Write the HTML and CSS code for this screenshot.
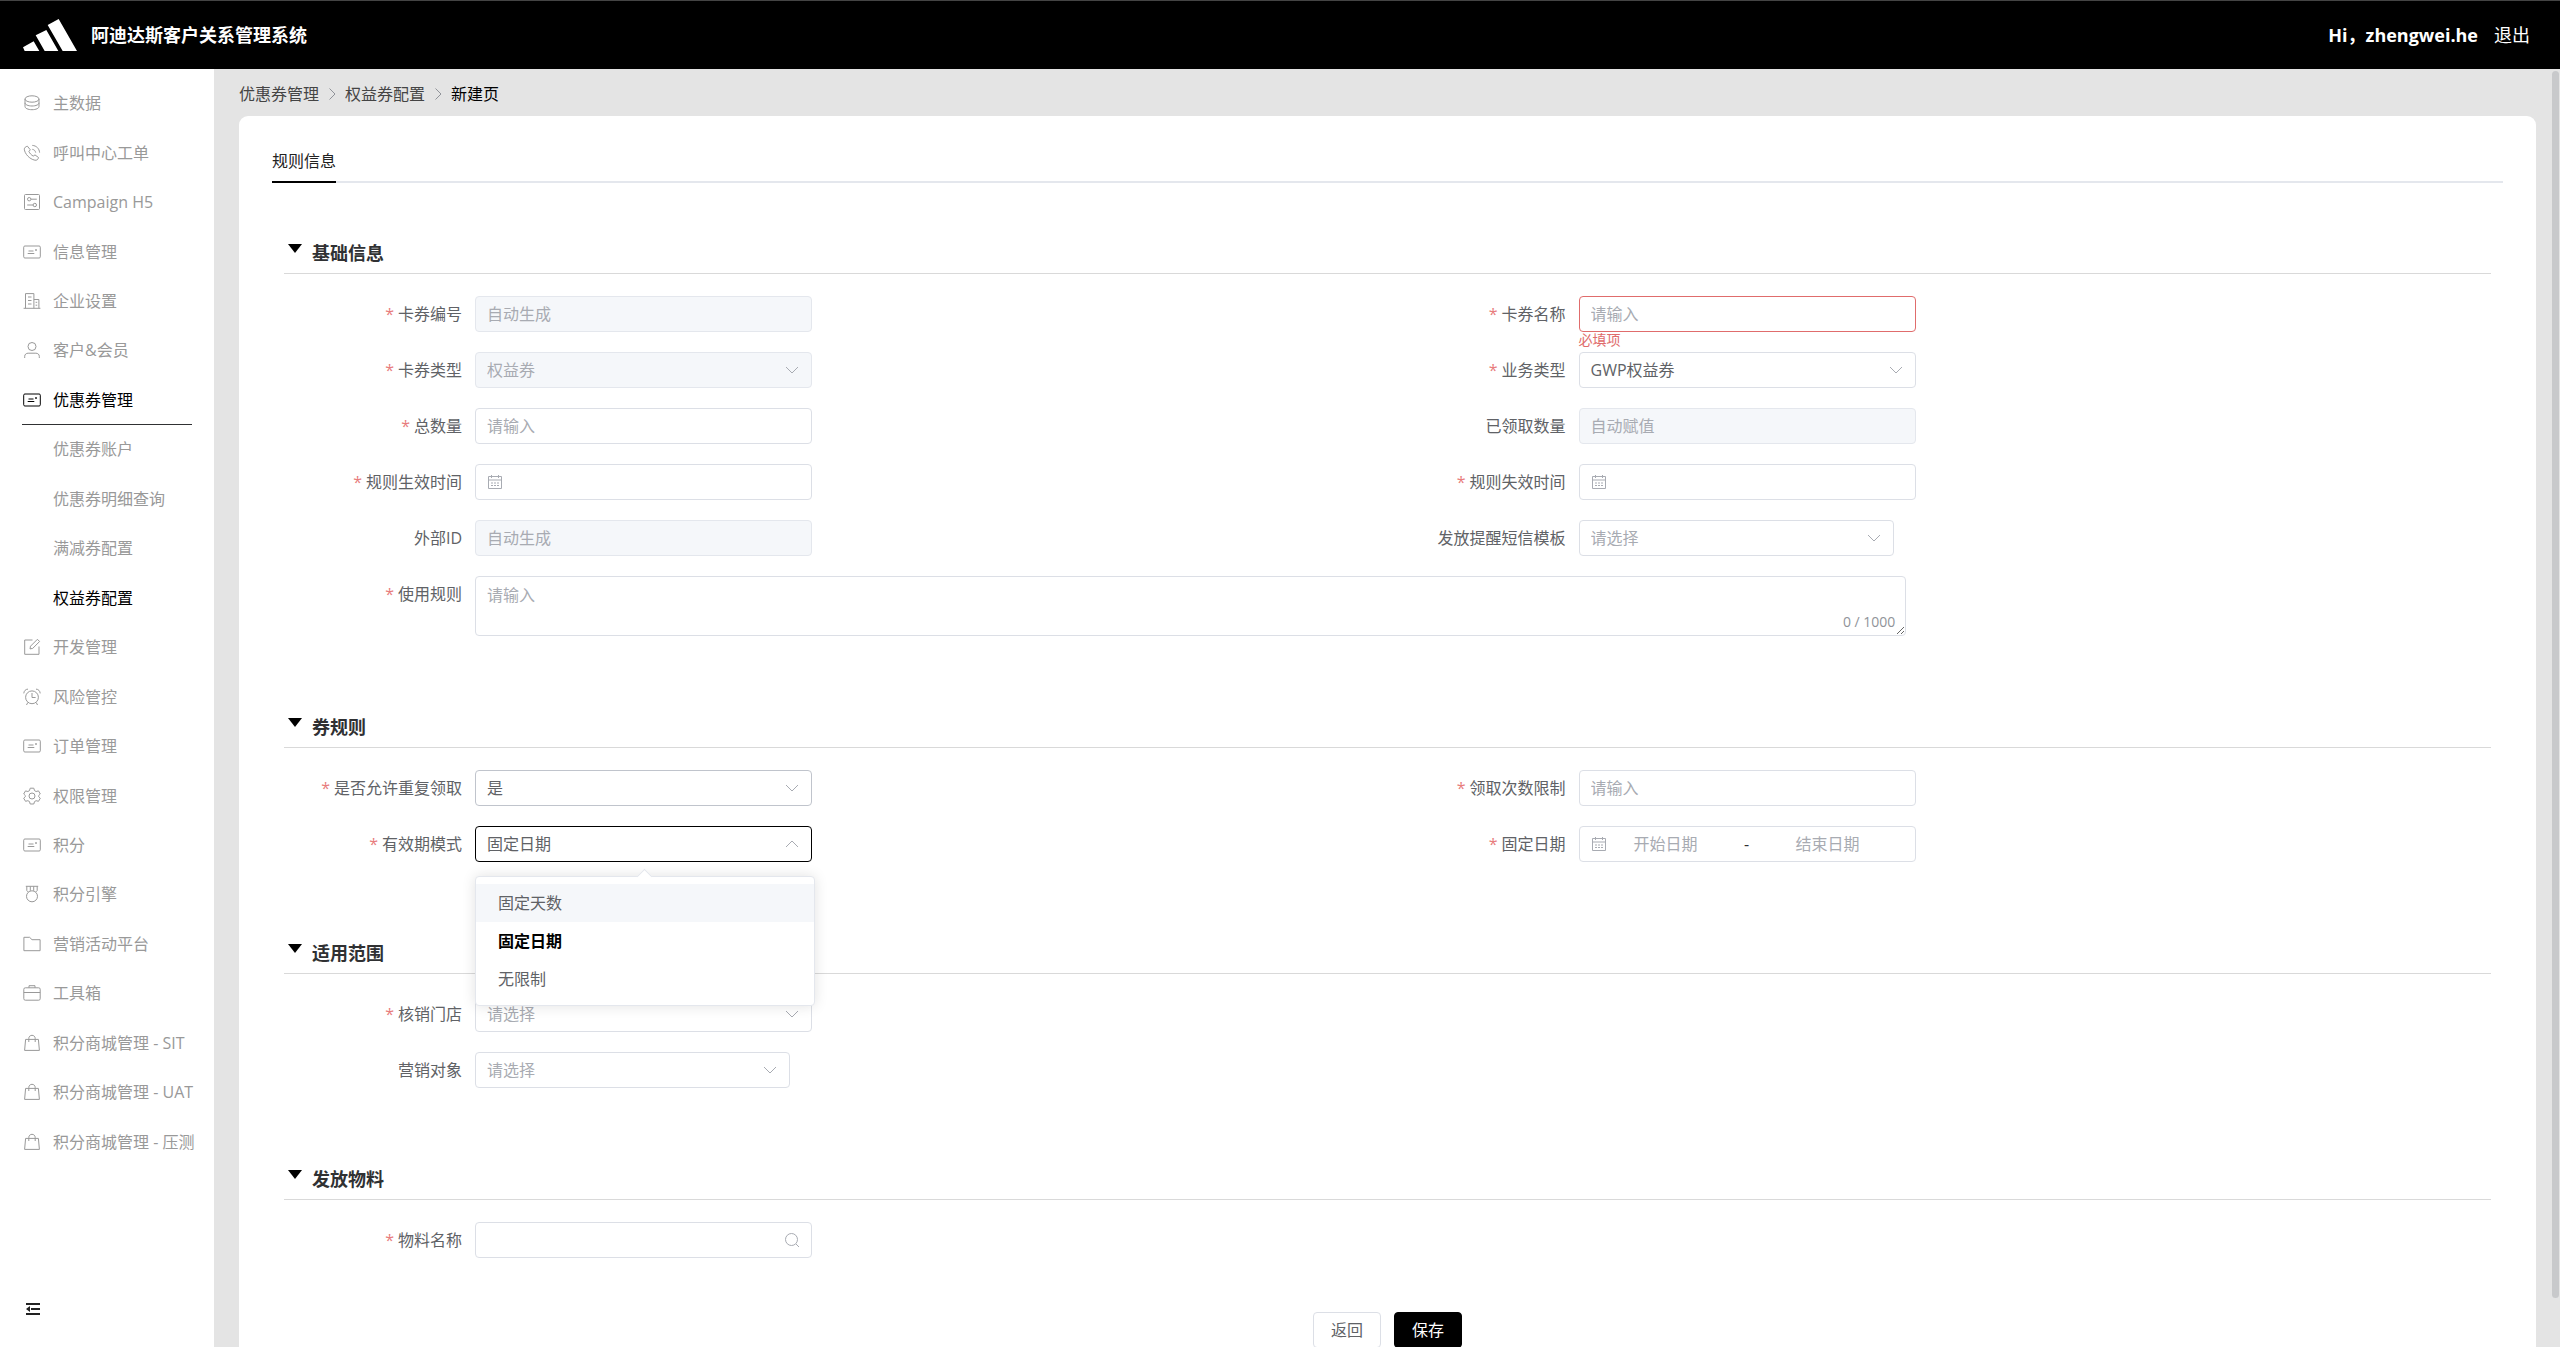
FILE: index.html
```html
<!DOCTYPE html>
<html lang="zh-CN">
<head>
<meta charset="utf-8">
<title>阿迪达斯客户关系管理系统</title>
<link rel="stylesheet" href="styles.css">
</head>
<body>
<svg class="sprite" aria-hidden="true">
  <symbol id="i-coin" viewBox="0 0 18 18"><ellipse cx="9" cy="5" rx="7" ry="3.2"/><path d="M2 5v7.5c0 1.8 3 3.2 7 3.2s7-1.400 7-3.200V5M2 8.800c0 1.800 3 3.200 7 3.200s7-1.400 7-3.200"/></symbol>
  <symbol id="i-phone" viewBox="0 0 18 18"><path d="M4.400 2.200 7.300 5.800 5.900 7.500c.9 1.900 2.400 3.500 4.300 4.600l1.800-1.200 3.500 2.600c-.3 2-1.800 3.100-3.600 2.700C6.300 15 1.800 9.800 1.300 5.200c0-1.400 1.400-2.700 3.100-3zM9.300 5.300c1.900.3 3 1.500 3.400 3.300M9.300 1.400c4.200.3 6.900 3.100 7.300 7.200"/></symbol>
  <symbol id="i-panel" viewBox="0 0 18 18"><rect x="1.500" y="1.500" width="15" height="15" rx="1"/><circle cx="6.200" cy="6.200" r="1.700"/><circle cx="11.800" cy="12" r="1.700"/><path d="M8 6.200h5.800M4.200 12h5.800"/></symbol>
  <symbol id="i-card" viewBox="0 0 18 18"><rect x=".700" y="3" width="16.600" height="12" rx="1.200"/><path d="M5.500 8h5M4.700 10.500h6.600"/><circle cx="13" cy="7" r=".5" fill="currentColor"/></symbol>
  <symbol id="i-office" viewBox="0 0 18 18"><path d="M2.500 16.300V1.600h8.400v14.700M10.900 7.500h5v8.800M.6 16.300h16.800M5 5h3.500M5 8.500h3.500M5 12h3.500M12.600 10.300h1.600M12.600 13.200h1.600"/></symbol>
  <symbol id="i-user" viewBox="0 0 18 18"><circle cx="9" cy="5.500" r="4"/><path d="M1.700 17v-1.600c0-1.900 1.400-3.200 3.400-3.200h7.800c2 0 3.400 1.300 3.400 3.200V17"/></symbol>
  <symbol id="i-edit" viewBox="0 0 18 18"><path d="M9.500 2H1.700v14.300H16V8.500M7 10.900l.5-2.700 6.900-6.900 2.200 2.200-6.900 6.900z"/></symbol>
  <symbol id="i-alarm" viewBox="0 0 18 18"><circle cx="9" cy="9.300" r="6.400"/><path d="M9 5v4.500h3.600M4.800 14.500l-1.300 2.500M13.200 14.500l1.300 2.500M.8 5.400C.9 3 2.600 1.200 5 1.100M17.200 5.400C17.100 3 15.400 1.200 13 1.100"/></symbol>
  <symbol id="i-gear" viewBox="0 0 18 18"><circle cx="9" cy="9" r="3"/><path d="M7.200 1.200h3.600l.7 2.400 1.600.9 2.400-.6 1.800 3.100L15.600 8.700v.8l1.700 1.700-1.800 3.100-2.400-.6-1.600.9-.7 2.400H7.200l-.7-2.400-1.600-.9-2.400.6-1.800-3.100 1.700-1.700v-.8L.7 7l1.800-3.100 2.400.6 1.600-.9z"/></symbol>
  <symbol id="i-medal" viewBox="0 0 18 18"><circle cx="9" cy="11.300" r="5.500"/><path d="M2.800 1.300h12.400M3.800 1.300v4.200l1.600 1.600M14.200 1.300v4.200l-1.600 1.600M7.300 1.300v4.500M10.700 1.300v4.500"/></symbol>
  <symbol id="i-folder" viewBox="0 0 18 18"><path d="M.9 15.700V2.300h5.700l2.400 2.400h8.100v11z"/></symbol>
  <symbol id="i-case" viewBox="0 0 18 18"><rect x=".8" y="3.800" width="16.400" height="12.400" rx="1.500"/><path d="M.8 8.500h16.400M6 3.800V1.700h6v2.100"/></symbol>
  <symbol id="i-bag" viewBox="0 0 18 18"><path d="M2.600 5.400h12.800l1 11H1.600zM5.800 8V4.500C5.800 2.600 7.200 1.300 9 1.300s3.200 1.300 3.200 3.200V8"/></symbol>
  <symbol id="i-fold" viewBox="0 0 14 12"><path fill="currentColor" stroke="none" d="M0 0h14v2H0zM5 5h9v2H5zM0 10h14v2H0zM4 3v6L0 6z"/></symbol>
  <symbol id="i-right" viewBox="0 0 16 16"><path d="m5.500 2.500 5.500 5.500-5.500 5.500"/></symbol>
  <symbol id="i-down" viewBox="0 0 16 16"><path d="m2 5 6 6 6-6"/></symbol>
  <symbol id="i-up" viewBox="0 0 16 16"><path d="m2 11 6-6 6 6"/></symbol>
  <symbol id="i-date" viewBox="0 0 16 16"><path d="M1.500 2.500h13v12h-13zM1.500 6h13M4.500 1v3M11.500 1v3M4 9h2M7 9h2M10 9h2M4 11.500h2M7 11.500h2M10 11.500h2"/></symbol>
  <symbol id="i-search" viewBox="0 0 16 16"><circle cx="7.500" cy="7.500" r="6"/><path d="m12 12 3 3"/></symbol>
</svg>

<header class="topbar">
  <svg class="logo" viewBox="0 0 162 96" role="img" aria-label="adidas"><path d="M74 18 107 0l55 96h-43zM38 49l32-16 36 63H65zM0 85l32-18 17 29H5z"/></svg>
  <h1 class="app-name">阿迪达斯客户关系管理系统</h1>
  <span class="hello">Hi，zhengwei.he</span>
  <a class="logout" href="#">退出</a>
</header>

<div class="shell">
  <nav class="sidebar">
    <ul class="menu">
      <li><a href="#"><svg class="icon"><use href="#i-coin"/></svg>主数据</a></li>
      <li><a href="#"><svg class="icon"><use href="#i-phone"/></svg>呼叫中心工单</a></li>
      <li><a href="#"><svg class="icon"><use href="#i-panel"/></svg>Campaign H5</a></li>
      <li><a href="#"><svg class="icon"><use href="#i-card"/></svg>信息管理</a></li>
      <li><a href="#"><svg class="icon"><use href="#i-office"/></svg>企业设置</a></li>
      <li><a href="#"><svg class="icon"><use href="#i-user"/></svg>客户&amp;会员</a></li>
      <li><a class="open" href="#"><svg class="icon"><use href="#i-card"/></svg>优惠券管理</a></li>
      <li><a class="sub" href="#">优惠券账户</a></li>
      <li><a class="sub" href="#">优惠券明细查询</a></li>
      <li><a class="sub" href="#">满减券配置</a></li>
      <li><a class="sub current" href="#">权益券配置</a></li>
      <li><a href="#"><svg class="icon"><use href="#i-edit"/></svg>开发管理</a></li>
      <li><a href="#"><svg class="icon"><use href="#i-alarm"/></svg>风险管控</a></li>
      <li><a href="#"><svg class="icon"><use href="#i-card"/></svg>订单管理</a></li>
      <li><a href="#"><svg class="icon"><use href="#i-gear"/></svg>权限管理</a></li>
      <li><a href="#"><svg class="icon"><use href="#i-card"/></svg>积分</a></li>
      <li><a href="#"><svg class="icon"><use href="#i-medal"/></svg>积分引擎</a></li>
      <li><a href="#"><svg class="icon"><use href="#i-folder"/></svg>营销活动平台</a></li>
      <li><a href="#"><svg class="icon"><use href="#i-case"/></svg>工具箱</a></li>
      <li><a href="#"><svg class="icon"><use href="#i-bag"/></svg>积分商城管理 - SIT</a></li>
      <li><a href="#"><svg class="icon"><use href="#i-bag"/></svg>积分商城管理 - UAT</a></li>
      <li><a href="#"><svg class="icon"><use href="#i-bag"/></svg>积分商城管理 - 压测</a></li>
    </ul>
    <div class="sidebar-foot">
      <button class="fold" type="button" aria-label="收起菜单"><svg><use href="#i-fold"/></svg></button>
    </div>
  </nav>

  <main class="main">
    <nav class="crumbs">
      <a href="#">优惠券管理</a>
      <svg class="icon"><use href="#i-right"/></svg>
      <a href="#">权益券配置</a>
      <svg class="icon"><use href="#i-right"/></svg>
      <span>新建页</span>
    </nav>

    <form class="card">
      <div class="tabs"><button class="tab" type="button">规则信息</button></div>

      <div class="sections">
        <section class="section">
          <h2 class="section-head"><span class="caret"></span>基础信息</h2>
          <div class="fields">
            <div class="field">
              <label class="required" for="code">卡券编号</label>
              <div class="control"><input id="code" type="text" placeholder="自动生成" disabled></div>
            </div>
            <div class="field">
              <label class="required" for="name">卡券名称</label>
              <div class="control invalid"><input id="name" type="text" placeholder="请输入"><p class="error">必填项</p></div>
            </div>
            <div class="field">
              <label class="required" for="kind">卡券类型</label>
              <div class="control"><select id="kind" disabled><option>权益券</option></select><svg class="icon suffix"><use href="#i-down"/></svg></div>
            </div>
            <div class="field">
              <label class="required" for="biz">业务类型</label>
              <div class="control"><select id="biz"><option>GWP权益券</option></select><svg class="icon suffix"><use href="#i-down"/></svg></div>
            </div>
            <div class="field">
              <label class="required" for="total">总数量</label>
              <div class="control"><input id="total" type="text" placeholder="请输入"></div>
            </div>
            <div class="field">
              <label for="taken">已领取数量</label>
              <div class="control"><input id="taken" type="text" placeholder="自动赋值" disabled></div>
            </div>
            <div class="field">
              <label class="required" for="from">规则生效时间</label>
              <div class="control dated"><input id="from" type="text"><svg class="icon prefix"><use href="#i-date"/></svg></div>
            </div>
            <div class="field">
              <label class="required" for="to">规则失效时间</label>
              <div class="control dated"><input id="to" type="text"><svg class="icon prefix"><use href="#i-date"/></svg></div>
            </div>
            <div class="field">
              <label for="ext">外部ID</label>
              <div class="control"><input id="ext" type="text" placeholder="自动生成" disabled></div>
            </div>
            <div class="field">
              <label for="sms">发放提醒短信模板</label>
              <div class="control narrow"><select id="sms" class="empty"><option>请选择</option></select><svg class="icon suffix"><use href="#i-down"/></svg></div>
            </div>
            <div class="field wide">
              <label class="required" for="usage">使用规则</label>
              <div class="control"><textarea id="usage" placeholder="请输入"></textarea><span class="count">0 / 1000</span></div>
            </div>
          </div>
        </section>

        <section class="section">
          <h2 class="section-head"><span class="caret"></span>券规则</h2>
          <div class="fields">
            <div class="field">
              <label class="required" for="repeat">是否允许重复领取</label>
              <div class="control hovered"><select id="repeat"><option>是</option></select><svg class="icon suffix"><use href="#i-down"/></svg></div>
            </div>
            <div class="field">
              <label class="required" for="limit">领取次数限制</label>
              <div class="control"><input id="limit" type="text" placeholder="请输入"></div>
            </div>
            <div class="field">
              <label class="required" for="mode">有效期模式</label>
              <div class="control active">
                <select id="mode"><option>固定日期</option></select><svg class="icon suffix"><use href="#i-up"/></svg>
                <ul class="options" role="listbox">
                  <li class="hover" role="option">固定天数</li>
                  <li class="selected" role="option" aria-selected="true">固定日期</li>
                  <li role="option">无限制</li>
                </ul>
              </div>
            </div>
            <div class="field">
              <label class="required" for="start">固定日期</label>
              <div class="control range">
                <svg class="icon"><use href="#i-date"/></svg>
                <input id="start" type="text" placeholder="开始日期">
                <span class="dash">-</span>
                <input type="text" placeholder="结束日期" aria-label="结束日期">
              </div>
            </div>
          </div>
        </section>

        <section class="section">
          <h2 class="section-head"><span class="caret"></span>适用范围</h2>
          <div class="fields">
            <div class="field wide">
              <label class="required" for="store">核销门店</label>
              <div class="control"><select id="store" class="empty"><option>请选择</option></select><svg class="icon suffix"><use href="#i-down"/></svg></div>
            </div>
            <div class="field">
              <label for="target">营销对象</label>
              <div class="control narrow"><select id="target" class="empty"><option>请选择</option></select><svg class="icon suffix"><use href="#i-down"/></svg></div>
            </div>
          </div>
        </section>

        <section class="section">
          <h2 class="section-head"><span class="caret"></span>发放物料</h2>
          <div class="fields">
            <div class="field">
              <label class="required" for="item">物料名称</label>
              <div class="control"><input id="item" type="text"><svg class="icon suffix"><use href="#i-search"/></svg></div>
            </div>
          </div>
        </section>
      </div>

      <div class="actions">
        <button class="btn" type="button">返回</button>
        <button class="btn primary" type="submit">保存</button>
      </div>
    </form>
  </main>
  <div class="scroll-thumb"></div>
</div>
</body>
</html>
```
FILE: styles.css
```css
* { box-sizing: border-box; }

body {
  margin: 0;
  height: 100vh;
  display: flex;
  flex-direction: column;
  overflow: hidden;
  font: 16px/20px "Open Sans", "Noto Sans CJK SC", sans-serif;
  color: #606266;
}

a { color: inherit; text-decoration: none; }
h1, h2, p, ul { margin: 0; padding: 0; }
ul { list-style: none; }
button, input, select, textarea { font: inherit; color: inherit; }

.sprite { position: absolute; width: 0; height: 0; }
.icon {
  width: 18px;
  height: 18px;
  flex: none;
  fill: none;
  stroke: currentColor;
}

/* top bar */
.topbar {
  height: 69px;
  flex: none;
  display: flex;
  align-items: center;
  padding: 0 30px 0 23px;
  background: #000;
  border-top: 1px solid #444;
  color: #fff;
  font-size: 18px;
}
.logo { width: 54px; height: 32px; fill: #fff; }
.app-name { margin-left: 14px; font-size: 18px; font-weight: 700; }
.hello { margin-left: auto; font-weight: 700; }
.logout { margin-left: 16px; }

.shell {
  flex: 1;
  min-height: 0;
  display: flex;
  position: relative;
  background: #e4e4e4;
}

/* side menu */
.sidebar {
  width: 214px;
  flex: none;
  display: flex;
  flex-direction: column;
  padding-top: 10px;
  background: #fff;
  color: #999;
}
.menu {
  flex: 1;
  display: grid;
  grid-template-columns: minmax(0, 1fr);
  grid-auto-rows: 1fr;
}
.menu li { display: flex; }
.menu a {
  flex: 1;
  min-width: 0;
  display: flex;
  align-items: center;
  gap: 12px;
  margin: 0 22px;
  padding-left: 1px;
  white-space: nowrap;
  border-bottom: 1px solid transparent;
}
.menu .sub { padding-left: 31px; }
.menu .open { color: #000; border-color: #303133; }
.menu .current { color: #000; }
.sidebar-foot {
  height: 180px;
  display: flex;
  align-items: flex-end;
  padding: 0 26px 32px;
}
.fold { padding: 0; border: 0; background: none; color: #222; display: flex; }
.fold svg { width: 14px; height: 12px; }

/* content area */
.main {
  flex: 1;
  overflow-y: auto;
  scrollbar-width: none;
  padding: 0 24px 24px 25px;
}
.crumbs {
  height: 47px;
  display: flex;
  align-items: center;
  gap: 5px;
  padding-top: 2px;
  color: #444;
}
.crumbs .icon { width: 16px; height: 16px; color: #909399; }
.crumbs span { color: #000; }
.scroll-thumb {
  position: absolute;
  top: 2px;
  right: 1px;
  width: 7px;
  height: 96%;
  border-radius: 4px;
  background: #c8c9cb;
}

.card {
  padding: 25px 33px 34px;
  border-radius: 9px;
  background: #fff;
}
.tabs { display: flex; border-bottom: 2px solid #e4e7ed; }
.tab {
  height: 42px;
  margin-bottom: -2px;
  padding: 0;
  border: 0;
  border-bottom: 2px solid #000;
  background: none;
  color: #222;
}

.sections { padding: 0 12px; }
.section { padding-top: 50px; }
.section-head {
  display: flex;
  gap: 10px;
  padding-left: 4px;
  border-bottom: 1px solid #d9d9d9;
  font-size: 18px;
  line-height: 40px;
  color: #303133;
}
.caret {
  align-self: flex-start;
  margin-top: 11px;
  border: 7px solid transparent;
  border-top: 9px solid #000;
  border-bottom: 0;
}

/* form grid */
.fields {
  display: grid;
  grid-template-columns: 1fr 1fr;
  row-gap: 20px;
  padding: 22px 0 21px;
}
.field { display: flex; min-width: 0; }
.field.wide { grid-column: 1 / -1; }
.field label {
  width: 191px;
  flex: none;
  padding-right: 13px;
  text-align: right;
  line-height: 36px;
}
.required::before { content: "*"; margin-right: 4px; color: #e87c7c; }

.control { position: relative; width: 337px; }
.control.narrow { width: 315px; }
.control input, .control select, .control textarea {
  display: block;
  width: 100%;
  height: 36px;
  margin: 0;
  padding: 0 11px;
  border: 1px solid #dcdfe6;
  border-radius: 4px;
  outline: 0;
  background: #fff;
  appearance: none;
}
.control textarea {
  height: 60px;
  padding: 8px 11px;
  resize: vertical;
}
.field.wide:has(textarea) .control { width: calc((100% - 191px) * 0.71); }
.control ::placeholder, .control select.empty { color: #a8abb2; opacity: 1; }
.control :disabled {
  background: #f5f7fa;
  border-color: #e4e7ed;
  color: #a8abb2;
  opacity: 1;
}
.control.dated input { padding-left: 36px; }
.control.invalid input { border-color: #e06c6c; }
.control.hovered select { border-color: #c0c4cc; }
.control.active select { border-color: #000; }
.control .icon { width: 16px; height: 16px; color: #a8abb2; }
.prefix, .suffix { position: absolute; top: 10px; pointer-events: none; }
.prefix { left: 12px; }
.suffix { right: 12px; }

.error {
  position: absolute;
  top: 36px;
  left: 0;
  font-size: 14px;
  line-height: 16px;
  color: #e06c6c;
}
.count {
  position: absolute;
  right: 11px;
  bottom: 4px;
  font-size: 14px;
  color: #909399;
}

.control.range {
  height: 36px;
  display: flex;
  align-items: center;
  padding: 0 28px 0 11px;
  border: 1px solid #dcdfe6;
  border-radius: 4px;
}
.control.range input {
  flex: 1;
  min-width: 0;
  height: 32px;
  padding: 0;
  border: 0;
  text-align: center;
}
.dash { width: 44px; text-align: center; color: #303133; }

/* opened drop-down list */
.options {
  position: absolute;
  z-index: 2;
  top: 50px;
  left: 0;
  width: 340px;
  padding: 7px 0;
  border: 1px solid #e4e7ed;
  border-radius: 4px;
  background: #fff;
  box-shadow: 0 0 14px rgba(0, 0, 0, .12);
}
.options::before {
  content: "";
  position: absolute;
  top: -6px;
  left: 50%;
  width: 10px;
  height: 10px;
  margin-left: -6px;
  border: 1px solid #e4e7ed;
  border-right: 0;
  border-bottom: 0;
  background: #fff;
  transform: rotate(45deg);
}
.options li { padding: 0 22px; line-height: 38px; }
.options .hover { background: #f5f7fa; }
.options .selected { color: #000; font-weight: 700; }

.actions {
  display: flex;
  justify-content: center;
  gap: 13px;
  padding-top: 33px;
}
.btn {
  width: 68px;
  height: 36px;
  padding: 0;
  border: 1px solid #dcdfe6;
  border-radius: 4px;
  background: #fff;
}
.btn.primary { border-color: #000; background: #000; color: #fff; }
```
